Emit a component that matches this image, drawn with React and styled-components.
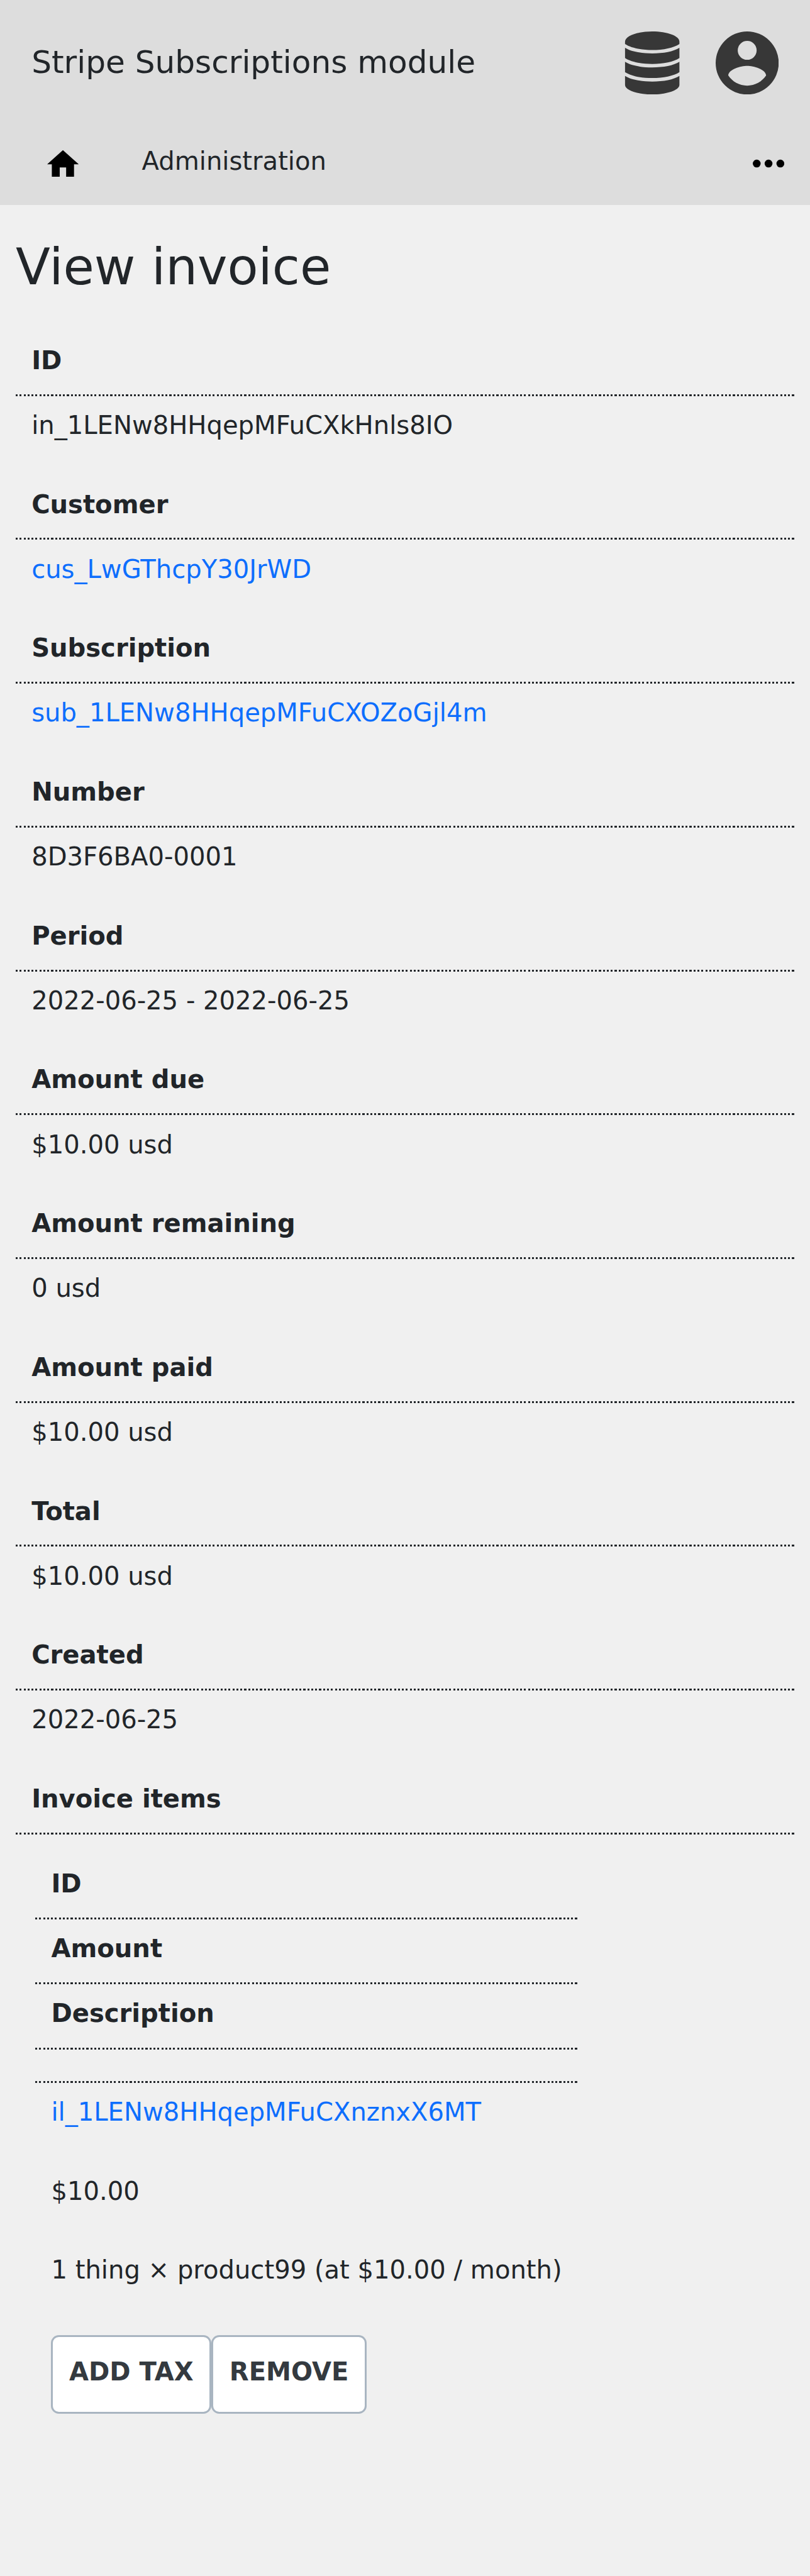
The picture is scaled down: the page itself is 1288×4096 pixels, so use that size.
import React from 'react';
import styled, { createGlobalStyle } from 'styled-components';

// One layout unit of the mobile design, in page pixels.
const u = (n) => `${(n * 3.1332).toFixed(3)}px`;

const Global = createGlobalStyle`
  html, body { margin: 0; background: #f0f0f0; }
  body {
    font-family: "DejaVu Sans", sans-serif;
    font-size: ${u(12.8)};
    line-height: ${u(19.2)};
    color: #212529;
  }
`;

const Page = styled.div`
  min-height: 4096px;
  background: #f0f0f0;
`;

const Header = styled.header`
  height: ${u(104)};
  background: #ddd;
`;

const TitleBar = styled.div`
  display: flex;
  align-items: center;
  height: ${u(64)};
  padding: 0 ${u(16)};
  box-sizing: border-box;
`;

const Brand = styled.div`
  flex: 1;
  font-size: ${u(16)};
  line-height: ${u(24)};
  padding-bottom: ${u(0.8)};
`;

const HeaderIcons = styled.div`
  display: flex;
  gap: ${u(16)};
`;

const BigIcon = styled.svg`
  display: block;
  width: ${u(32)};
  height: ${u(32)};
  fill: #373737;
`;

const Nav = styled.nav`
  display: flex;
  align-items: flex-start;
  height: ${u(40)};
  padding: ${u(8)} ${u(13)} 0 ${u(24)};
  box-sizing: border-box;
`;

const NavIcon = styled.svg`
  display: block;
  width: ${u(16)};
  height: ${u(16)};
  margin-top: ${u(3)};
`;

const NavLink = styled.span`
  flex: 1;
  margin-left: ${u(32)};
`;

const Heading = styled.h1`
  margin: 0;
  padding: ${u(16.3)} ${u(8)} 0;
  height: ${u(61.1)};
  box-sizing: border-box;
  font-size: ${u(25.6)};
  line-height: ${u(30.7)};
  font-weight: 400;
`;

const Fields = styled.dl`
  margin: 0;
  padding: 0 ${u(8)};
`;

const Label = styled.dt`
  box-sizing: border-box;
  height: ${(p) => u(p.$h || 35.9)};
  padding: ${(p) => u(p.$top ?? 8.2)} ${u(8)} 0;
  font-weight: 700;
  background: repeating-linear-gradient(to right, #212529 0 ${u(1)}, transparent ${u(1)} ${u(2)})
    left bottom / 100% 3px no-repeat;
`;

const Value = styled.dd`
  box-sizing: border-box;
  margin: 0;
  height: ${(p) => u(p.$h || 37.1)};
  padding: ${u(5.2)} ${u(8)} 0;
  white-space: nowrap;
`;

const Link = styled.a`
  color: #0d6efd;
  text-decoration: none;
`;

const Items = styled.dl`
  margin: 0 0 0 ${u(10)};
  padding-top: ${u(7.25)};
  width: ${u(275)};
`;

const Actions = styled.div`
  display: flex;
  padding-left: ${u(8)};
`;

const Button = styled.button`
  box-sizing: border-box;
  height: ${u(40)};
  padding: 0 ${u(8.15)} ${u(2.8)};
  border: 3px solid #a9b5c1;
  border-radius: ${u(4)};
  background: #fff;
  color: #343a40;
  font: 700 ${u(12.8)} / ${u(19.2)} "DejaVu Sans", sans-serif;
  text-transform: uppercase;
`;

const fields = [
  ['ID', 'in_1LENw8HHqepMFuCXkHnls8IO'],
  ['Customer', 'cus_LwGThcpY30JrWD', true],
  ['Subscription', 'sub_1LENw8HHqepMFuCXOZoGjl4m', true],
  ['Number', '8D3F6BA0-0001'],
  ['Period', '2022-06-25 - 2022-06-25'],
  ['Amount due', '$10.00 usd'],
  ['Amount remaining', '0 usd'],
  ['Amount paid', '$10.00 usd'],
  ['Total', '$10.00 usd'],
  ['Created', '2022-06-25'],
];

export default function App() {
  return (
    <Page>
      <Global />
      <Header>
        <TitleBar>
          <Brand>Stripe Subscriptions module</Brand>
          <HeaderIcons>
            <BigIcon viewBox="0 0 112 112">
              <path d="M7.700 18C7.700 8 29 0 56 0S104.300 8 104.300 18V22.300C94 29 76 33 56 33S18 29 7.700 22.300zM7.700 29C18 35.500 36 39 56 39S94 35.500 104.300 29V47.200C94 54 76 57.800 56 57.800S18 54 7.700 47.200zM7.700 54C18 60.500 36 64 56 64S94 60.500 104.300 54V72.300C94 79 76 82.800 56 82.800S18 79 7.700 72.300zM7.700 79C18 85.500 36 89 56 89S94 85.500 104.300 79V95C104.300 104 82.700 112 56 112S7.700 104 7.700 95z" />
            </BigIcon>
            <BigIcon viewBox="0 0 20 20">
              <path fillRule="evenodd" d="M10 0a10 10 0 1 1 0 20 10 10 0 0 1 0-20zm0 3a3 3 0 1 0 0 6 3 3 0 0 0 0-6zm0 14.200c2.500 0 4.700-1.280 6-3.220-.03-1.990-4-3.080-6-3.080s-5.970 1.090-6 3.080c1.290 1.940 3.500 3.220 6 3.220z" />
            </BigIcon>
          </HeaderIcons>
        </TitleBar>
        <Nav>
          <NavIcon viewBox="0 0 56 56">
            <path d="M28 4.300 56 29.200h-8.300v22.300h-14V34.800H22.300v16.700h-14V29.200H0z" />
          </NavIcon>
          <NavLink>Administration</NavLink>
          <NavIcon viewBox="0 0 56 56">
            <circle cx="7" cy="28" r="7" />
            <circle cx="28" cy="28" r="7" />
            <circle cx="49" cy="28" r="7" />
          </NavIcon>
        </Nav>
      </Header>
      <Heading>View invoice</Heading>
      <Fields>
        {fields.map(([label, value, link]) => (
          <React.Fragment key={label}>
            <Label>{label}</Label>
            <Value>{link ? <Link>{value}</Link> : value}</Value>
          </React.Fragment>
        ))}
        <Label>Invoice items</Label>
        <Items>
          <Label>ID</Label>
          <Label $h={33} $top={5.1}>Amount</Label>
          <Label $h={33} $top={5.1}>Description</Label>
          <Label $h={17} />
          <Value $h={40}><Link>il_1LENw8HHqepMFuCXnznxX6MT</Link></Value>
          <Value $h={40}>$10.00</Value>
          <Value $h={48}>1 thing × product99 (at $10.00 / month)</Value>
          <Actions>
            <Button>Add tax</Button>
            <Button>Remove</Button>
          </Actions>
        </Items>
      </Fields>
    </Page>
  );
}
